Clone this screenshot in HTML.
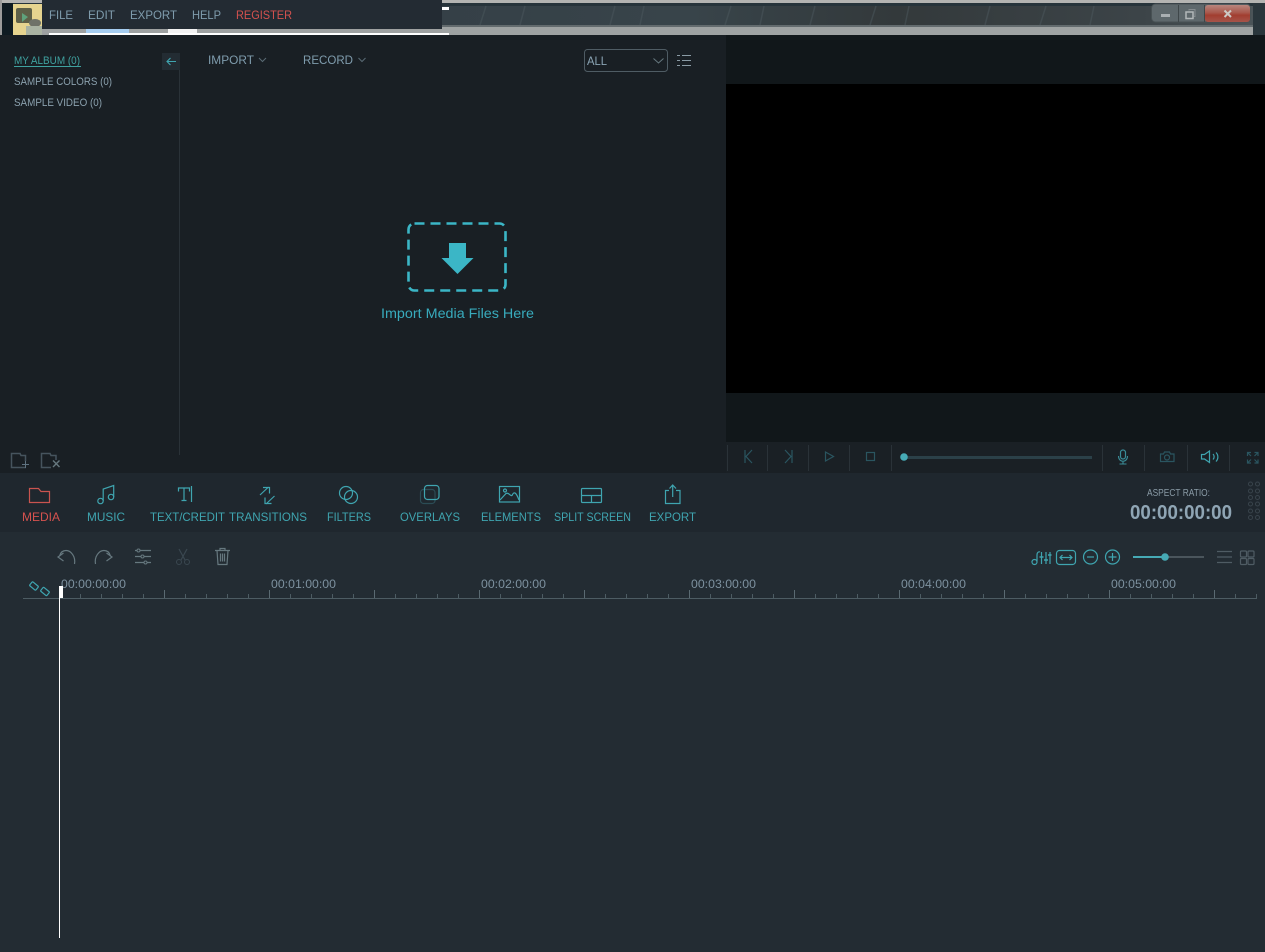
<!DOCTYPE html>
<html><head><meta charset="utf-8"><title>Editor</title>
<style>
html,body{margin:0;padding:0;background:#232c33;width:1265px;height:952px;overflow:hidden}
svg{display:block;position:absolute;left:0;top:0}
text{font-family:"Liberation Sans",sans-serif;white-space:pre}
.m{font-size:12px;fill:#7f9cad}
.s{font-size:11px;fill:#8ba1ae}
.t{font-size:12px;fill:#3fa5b0}
.c{font-size:12px;fill:#7d919f}
.ic{fill:none;stroke:#3fa5b0;stroke-width:1.2}
.g{fill:none;stroke:#66787f;stroke-width:1.2}
.d{fill:none;stroke:#2a5560;stroke-width:1.2}
</style></head><body>
<svg width="1265" height="952" viewBox="0 0 1265 952" xmlns="http://www.w3.org/2000/svg">
<defs>
<linearGradient id="st" x1="0" x2="1" y1="0" y2="0"><stop offset="0" stop-color="#354047"/><stop offset=".3" stop-color="#38444a"/><stop offset=".55" stop-color="#33393b"/><stop offset=".85" stop-color="#3c4448"/><stop offset="1" stop-color="#4d565a"/></linearGradient>
<linearGradient id="cl" x1="0" x2="0" y1="0" y2="1"><stop offset="0" stop-color="#b8867e"/><stop offset=".45" stop-color="#a9584c"/><stop offset=".6" stop-color="#a23e30"/><stop offset="1" stop-color="#a5544a"/></linearGradient>
</defs>
<rect width="1265" height="952" fill="#232c33"/>

<!-- top strip -->
<rect x="0" y="0" width="1265" height="3" fill="#b4b4b2"/>
<rect x="0" y="3" width="1265" height="3" fill="#27343b"/>
<rect x="442" y="6" width="823" height="19" fill="url(#st)"/>
<path d="M480 25l6-19M520 25l5-19M610 25l5-19M640 25l4-19M725 25l6-19M760 25l4-19M810 25l5-19M870 25l6-19M905 25l4-19M985 25l5-19M1040 25l6-19M1090 25l4-19" stroke="#4c585e" stroke-width="1.500" opacity=".5"/>
<rect x="442" y="25" width="823" height="2" fill="#636b6e"/>
<rect x="442" y="27" width="811" height="8" fill="#9fa3a3"/>
<rect x="1253" y="3" width="12" height="32" fill="#2a363c"/>
<rect x="442" y="7" width="7" height="3" fill="#fff"/>
<!-- left thumb -->
<rect x="0" y="0" width="2" height="35" fill="#9b9b9b"/>
<rect x="2" y="3" width="11" height="32" fill="#0f1b22"/>
<rect x="13" y="4" width="29" height="31" fill="#e6d48f"/>
<rect x="16" y="8" width="16" height="15" rx="2" fill="#5e6048"/>
<path d="M22 13l6 4-6 5z" fill="#5fa27c"/>
<ellipse cx="35" cy="23" rx="6" ry="4" fill="#6f7268"/>
<rect x="26" y="26" width="16" height="9" fill="#aab3a2"/>
<rect x="42" y="29" width="400" height="6" fill="#9ea1a1"/>
<rect x="86" y="29" width="43" height="4" fill="#a6cdf0"/>
<rect x="168" y="29" width="29" height="4" fill="#f2f2f2"/>
<rect x="49" y="33" width="400" height="2" fill="#fff"/>
<!-- menu -->
<rect x="42" y="0" width="400" height="29" fill="#232b33"/>
<text class="m" x="49" y="19" textLength="24" lengthAdjust="spacingAndGlyphs">FILE</text>
<text class="m" x="88" y="19" textLength="27" lengthAdjust="spacingAndGlyphs">EDIT</text>
<text class="m" x="130" y="19" textLength="47" lengthAdjust="spacingAndGlyphs">EXPORT</text>
<text class="m" x="192" y="19" textLength="29" lengthAdjust="spacingAndGlyphs">HELP</text>
<text class="m" x="236" y="19" textLength="56" lengthAdjust="spacingAndGlyphs" style="fill:#d5524f">REGISTER</text>
<!-- window buttons -->
<rect x="1151.500" y="4" width="99" height="18" rx="4" fill="#5e686c" stroke="#485154"/>
<rect x="1205" y="5" width="45" height="17" rx="3" fill="url(#cl)"/>
<path d="M1178.500 5V22M1204.500 5V22" stroke="#3f474a"/>
<rect x="1161" y="14" width="9" height="3" fill="#a9afb2"/>
<rect x="1186" y="12" width="7" height="6.500" fill="none" stroke="#b2b7b9" stroke-width="1.500"/>
<path d="M1189 10.500V9.500h6v7h-1" fill="none" stroke="#858c8f"/>
<path d="M1224.500 10.500l6.500 6.500M1231 10.500l-6.500 6.500" stroke="#cdc9c5" stroke-width="2"/>

<!-- main panels -->
<rect x="0" y="35" width="726" height="438" fill="#191f24"/>
<rect x="726" y="35" width="539" height="49" fill="#11171a"/>
<rect x="726" y="84" width="539" height="309" fill="#000"/>
<rect x="726" y="393" width="539" height="49" fill="#11171a"/>
<rect x="726" y="442" width="539" height="31" fill="#1a2025"/>
<rect x="0" y="473" width="1265" height="59" fill="#1f272e"/>

<!-- sidebar -->
<text class="s" x="14" y="64" textLength="66" lengthAdjust="spacingAndGlyphs" style="fill:#3fa19f">MY ALBUM (0)</text>
<rect x="14" y="66" width="67" height="1" fill="#3fa19f"/>
<text class="s" x="14" y="85" textLength="98" lengthAdjust="spacingAndGlyphs">SAMPLE COLORS (0)</text>
<text class="s" x="14" y="106" textLength="88" lengthAdjust="spacingAndGlyphs">SAMPLE VIDEO (0)</text>
<rect x="179" y="70" width="1" height="385" fill="#2a3238"/>
<rect x="162" y="53" width="18" height="17" fill="#232c33"/>
<path d="M167 61.500h9M170.500 58l-3.500 3.500 3.500 3.500" fill="none" stroke="#3fa5b0" stroke-width="1.100"/>
<path d="M26 467.500H11.500V453.500H20L21 455.500H25.500V461" fill="none" stroke="#46545e" stroke-width="1.500"/>
<path d="M22 464.500h7M25.500 461v7" stroke="#5e7280" stroke-width="1"/>
<path d="M51 467.500H41.500V453.500H50L51 455.500H56V460" fill="none" stroke="#46545e" stroke-width="1.500"/>
<path d="M53 460.500l6.500 6.500M59.500 460.500L53 467" stroke="#66787f" stroke-width="1.400"/>

<!-- import/record -->
<text class="m" x="208" y="64" textLength="46" lengthAdjust="spacingAndGlyphs">IMPORT</text>
<path d="M259 58l3.500 3.500L266 58" fill="none" stroke="#5a6b75"/>
<text class="m" x="303" y="64" textLength="50" lengthAdjust="spacingAndGlyphs">RECORD</text>
<path d="M358.500 58l3.500 3.500L365.500 58" fill="none" stroke="#5a6b75"/>
<rect x="584.500" y="49.500" width="83" height="22" rx="3" fill="none" stroke="#4f5c64"/>
<text class="m" x="587" y="65" textLength="20" lengthAdjust="spacingAndGlyphs" style="fill:#8ba5b5">ALL</text>
<path d="M653.500 58.500l5 4.500 5-4.500" fill="none" stroke="#66787f"/>
<path d="M682 55.500h9M682 60.500h9M682 65.500h9M677 55.500h3M677 60.500h3M677 65.500h3" stroke="#8a9ba5"/>

<!-- import placeholder -->
<rect x="408.500" y="223.500" width="97" height="67" rx="6" fill="none" stroke="#3bb6c6" stroke-width="2.600" stroke-dasharray="10 6"/>
<path d="M449 243H466V258H473.500L457.500 274L441.500 258H449Z" fill="#3bb6c6"/>
<text x="381" y="318" textLength="153" lengthAdjust="spacingAndGlyphs" style="font-size:13.500px;fill:#38abbd">Import Media Files Here</text>

<!-- player controls -->
<path d="M727.500 445v26M767.500 445v26M808.500 445v26M849.500 445v26M891.500 445v26M1102.500 445v26M1144.500 445v26M1187.500 445v26M1229.500 445v26" stroke="#2a3238"/>
<path class="d" d="M745 450v13M752 450l-6 6.500 6 6.500"/>
<path class="d" d="M792 450v13M785 450l6 6.500-6 6.500"/>
<path class="d" d="M825.500 452l8 4.500-8 4.500z"/>
<rect class="d" x="866.500" y="452.500" width="8" height="8"/>
<rect x="904" y="456" width="188" height="3" fill="#2b4048"/>
<circle cx="904" cy="457" r="3.800" fill="#46aab5"/>
<rect x="1120.500" y="450" width="5" height="9" rx="2.500" fill="none" stroke="#3a8c98" stroke-width="1.200"/>
<path d="M1118.500 456c0 7 9 7 9 0M1123 461v3M1119.500 464h7" fill="none" stroke="#3a8c98" stroke-width="1.100"/>
<path class="d" d="M1160.500 454h3l1-2h5l1 2h3.500v7.500h-13.500z"/><circle class="d" cx="1167" cy="457.500" r="2.500"/>
<path d="M1201.500 454.500h3l5-3.500v11.500l-5-3.500h-3z" fill="none" stroke="#3fa5b0" stroke-width="1.200"/>
<path d="M1213 454c1.500 1.500 1.500 4 0 5.500M1216 452.500c2.500 2.500 2.500 6.500 0 9" fill="none" stroke="#3fa5b0" stroke-width="1.200"/>
<path class="d" d="M1247.500 456v-3.500h3.500M1254.500 452.500h3.500v3.500M1247.500 459.500v3.500h3.500M1254.500 463h3.500v-3.500M1248 453l3 3M1257.500 453l-3 3M1248 462.500l3-3M1257.500 462.500l-3-3"/>

<!-- toolbar icons -->
<path d="M29.500 502.500V488.500H38.500L41 491.500H49.500V502.500Z" fill="none" stroke="#c9544f" stroke-width="1.200"/>
<g class="ic"><circle cx="100.500" cy="501" r="2.700"/><circle cx="111" cy="497" r="2.700"/><path d="M103.200 501V489L113.700 485.500V497"/></g>
<path class="ic" d="M178.500 491.500V488H189.500V491.500M184 488V500.500M181.500 500.500H186.500"/><path class="ic" d="M191.500 486V502"/>
<path class="ic" d="M260 495L268.500 487M263 487.500H269.500V493.500M274.500 496L266 504M271.500 503.500H265V497.500"/>
<circle class="ic" cx="346" cy="493" r="6.500"/><circle class="ic" cx="351" cy="497" r="6.500"/>
<rect x="420.500" y="489.500" width="14.500" height="14" rx="3" fill="none" stroke="#2b4c55" stroke-width="1.200"/>
<rect class="ic" x="424.500" y="485.500" width="14.500" height="14" rx="3"/>
<rect class="ic" x="499.500" y="486.500" width="20" height="15.500"/><circle class="ic" cx="505" cy="490.500" r="1.500"/>
<path class="ic" d="M500 500L506 493.500C509 492 510 496.500 512 495.500C514 491 516 492 519 500"/>
<rect class="ic" x="581.500" y="488.500" width="20" height="14" rx="1"/><path class="ic" d="M581.500 495.500H601.500M591.500 495.500V502.500"/>
<path class="ic" d="M669 490.500H665.500V503.500H680V490.500H676M672.700 497V485.500M669.500 488.500L672.700 485L676 488.500"/>

<!-- toolbar labels -->
<text class="t" x="22" y="521" textLength="38" lengthAdjust="spacingAndGlyphs" style="fill:#d5524f">MEDIA</text>
<text class="t" x="87" y="521" textLength="38" lengthAdjust="spacingAndGlyphs">MUSIC</text>
<text class="t" x="150" y="521" textLength="75" lengthAdjust="spacingAndGlyphs">TEXT/CREDIT</text>
<text class="t" x="229" y="521" textLength="78" lengthAdjust="spacingAndGlyphs">TRANSITIONS</text>
<text class="t" x="327" y="521" textLength="44" lengthAdjust="spacingAndGlyphs">FILTERS</text>
<text class="t" x="400" y="521" textLength="60" lengthAdjust="spacingAndGlyphs">OVERLAYS</text>
<text class="t" x="481" y="521" textLength="60" lengthAdjust="spacingAndGlyphs">ELEMENTS</text>
<text class="t" x="554" y="521" textLength="77" lengthAdjust="spacingAndGlyphs">SPLIT SCREEN</text>
<text class="t" x="649" y="521" textLength="47" lengthAdjust="spacingAndGlyphs">EXPORT</text>

<text x="1147" y="496" textLength="63" lengthAdjust="spacingAndGlyphs" style="font-size:10px;fill:#8a9ba6">ASPECT RATIO:</text>
<text x="1130" y="519" textLength="102" lengthAdjust="spacingAndGlyphs" style="font-size:20px;font-weight:bold;fill:#8fa5b4">00:00:00:00</text>
<g fill="none" stroke="#39444c">
<circle cx="1250.500" cy="484" r="2"/><circle cx="1257.500" cy="484" r="2"/>
<circle cx="1250.500" cy="491" r="2"/><circle cx="1257.500" cy="491" r="2"/>
<circle cx="1250.500" cy="497.500" r="2"/><circle cx="1257.500" cy="497.500" r="2"/>
<circle cx="1250.500" cy="504" r="2"/><circle cx="1257.500" cy="504" r="2"/>
<circle cx="1250.500" cy="511" r="2"/><circle cx="1257.500" cy="511" r="2"/>
<circle cx="1250.500" cy="517.500" r="2"/><circle cx="1257.500" cy="517.500" r="2"/>
</g>

<!-- timeline tools -->
<path class="g" d="M74.500 564C75.800 556.500 71 550.500 66 550.500C62.500 550.500 60.500 552.500 59.500 556M63.500 553L58 557L63.500 561"/>
<path class="g" d="M95.500 564C94.200 556.500 99 550.500 104 550.500C107.500 550.500 109.500 552.500 110.500 556M106.500 553L112 557L106.500 561"/>
<path class="g" d="M135 550.500H151M135 556.500H151M135 562.500H151"/>
<circle cx="138.500" cy="550.500" r="1.500" fill="#232c33" stroke="#66787f"/><circle cx="142.500" cy="556.500" r="1.500" fill="#232c33" stroke="#66787f"/><circle cx="145.500" cy="562.500" r="1.500" fill="#232c33" stroke="#66787f"/>
<path d="M179 549L185 560M187 549L181 560" fill="none" stroke="#3a4750" stroke-width="1.200"/><circle cx="179" cy="562" r="2.500" fill="none" stroke="#3a4750"/><circle cx="187" cy="562" r="2.500" fill="none" stroke="#3a4750"/>
<path class="g" d="M215 550.500H230M220 550.500V548.500H225V550.500M217 550.500L218 564.500H227L228 550.500M220.500 553.500V561.500M222.500 553.500V561.500M224.500 553.500V561.500"/>

<path class="ic" d="M1037 561V555C1037 552 1039 551.500 1040 552"/><circle class="ic" cx="1034.500" cy="562" r="2.500"/>
<path class="ic" d="M1041.500 552V564M1046 552V564M1050 552V564"/>
<path d="M1039.500 557h4M1044 560h4M1048 555h3.500" stroke="#3fa5b0" stroke-width="1.500"/>
<rect class="ic" x="1056.500" y="550.500" width="19" height="14" rx="3"/>
<path class="ic" d="M1060 557.500H1072M1062.500 555L1060 557.500L1062.500 560M1069.500 555L1072 557.500L1069.500 560"/>
<circle class="ic" cx="1090.500" cy="557" r="7"/><path class="ic" d="M1087 557H1094"/>
<circle class="ic" cx="1112.500" cy="557" r="7"/><path class="ic" d="M1108.500 557H1116.500M1112.500 553V561"/>
<rect x="1133" y="556" width="71" height="2" fill="#4a555c"/>
<rect x="1133" y="556" width="32" height="2" fill="#46aab5"/>
<circle cx="1165" cy="557" r="3.800" fill="#46aab5"/>
<path d="M1217 551.500H1232M1217 557H1232M1217 562.500H1232" stroke="#4f5c64" stroke-width="1.200"/>
<g fill="none" stroke="#4f5c64" stroke-width="1.200"><rect x="1240.500" y="551" width="6" height="6" rx="1"/><rect x="1248" y="551" width="6" height="6" rx="1"/><rect x="1240.500" y="558.500" width="6" height="6" rx="1"/><rect x="1248" y="558.500" width="6" height="6" rx="1"/></g>

<!-- ruler -->
<g class="ic"><rect x="-4" y="-2.500" width="8" height="5" rx="1" transform="translate(34 586) rotate(40)"/><rect x="-4" y="-2.500" width="8" height="5" rx="1" transform="translate(45 591.500) rotate(40)"/></g>
<text class="c" x="61" y="588" textLength="65" lengthAdjust="spacingAndGlyphs">00:00:00:00</text>
<text class="c" x="271" y="588" textLength="65" lengthAdjust="spacingAndGlyphs">00:01:00:00</text>
<text class="c" x="481" y="588" textLength="65" lengthAdjust="spacingAndGlyphs">00:02:00:00</text>
<text class="c" x="691" y="588" textLength="65" lengthAdjust="spacingAndGlyphs">00:03:00:00</text>
<text class="c" x="901" y="588" textLength="65" lengthAdjust="spacingAndGlyphs">00:04:00:00</text>
<text class="c" x="1111" y="588" textLength="65" lengthAdjust="spacingAndGlyphs">00:05:00:00</text>
<rect x="23" y="598" width="1234" height="1" fill="#4d5c63"/>
<path d="M80.500 594v4M101.500 594v4M122.500 594v4M143.500 594v4M185.500 594v4M206.500 594v4M227.500 594v4M248.500 594v4M290.500 594v4M311.500 594v4M332.500 594v4M353.500 594v4M395.500 594v4M416.500 594v4M437.500 594v4M458.500 594v4M500.500 594v4M521.500 594v4M542.500 594v4M563.500 594v4M605.500 594v4M626.500 594v4M647.500 594v4M668.500 594v4M710.500 594v4M731.500 594v4M752.500 594v4M773.500 594v4M815.500 594v4M836.500 594v4M857.500 594v4M878.500 594v4M920.500 594v4M941.500 594v4M962.500 594v4M983.500 594v4M1025.500 594v4M1046.500 594v4M1067.500 594v4M1088.500 594v4M1130.500 594v4M1151.500 594v4M1172.500 594v4M1193.500 594v4M1235.500 594v4M1256.500 594v4" stroke="#4d5c63"/>
<path d="M164.500 590v8M269.500 590v8M374.500 590v8M479.500 590v8M584.500 590v8M689.500 590v8M794.500 590v8M899.500 590v8M1004.500 590v8M1109.500 590v8M1214.500 590v8" stroke="#5a6a72"/>
<rect x="59" y="586" width="1" height="352" fill="#fff"/>
<rect x="59" y="586" width="4" height="12" fill="#fff"/>
</svg>
</body></html>
